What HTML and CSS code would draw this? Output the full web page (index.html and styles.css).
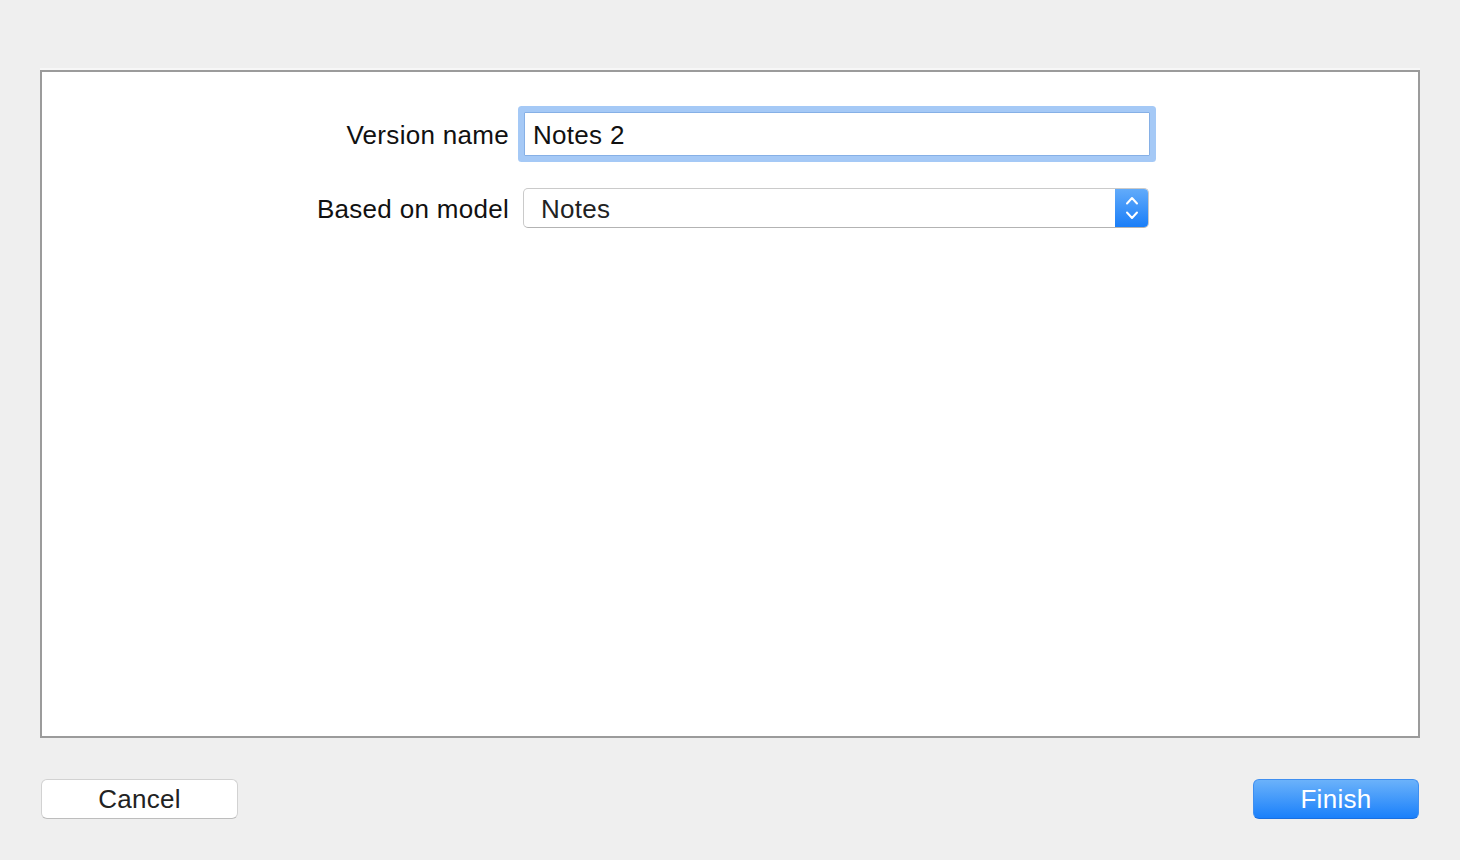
FILE: index.html
```html
<html>
  <head>
    <title>New Version</title>
    <meta name="viewport" content="width=device-width, initial-scale=1">
    <link rel="stylesheet" href="styles.css">
  </head>
  <body>
    <div class="panel">
      <div class="form">
        <label class="label" for="vname">Version name</label>
        <input class="field" id="vname" type="text" value="Notes 2">

        <span class="label">Based on model</span>
        <div class="popup">
          <span class="popup-text">Notes</span>
          <span class="popup-arrows">
            <svg width="16" height="26" viewBox="0 0 16 26">
              <path d="M3 8.5 L8 3 L13 8.5" fill="none" stroke="#fff" stroke-width="2" stroke-linecap="round" stroke-linejoin="round"/>
              <path d="M3 17.5 L8 23 L13 17.5" fill="none" stroke="#fff" stroke-width="2" stroke-linecap="round" stroke-linejoin="round"/>
            </svg>
          </span>
        </div>
      </div>
    </div>

    <div class="footer">
      <button class="button cancel">Cancel</button>
      <button class="button finish">Finish</button>
    </div>
  </body>
</html>
```

FILE: styles.css
```css
body {
  margin: 0;
  background-color: #efefef;
  font-family: "Liberation Sans", Arial, sans-serif;
  font-size: 26px;
  letter-spacing: 0.3px;
  color: #111;
}

/* ----------------------------------- Panel */
.panel {
  margin: 70px 40px 0 40px;
  height: 664px;
  background-color: #fff;
  border: 2px solid #9b9b9b;
  box-shadow: 0 -2px 0 #f7f7f7;
}

.form {
  display: grid;
  grid-template-columns: 467px 640px;
  column-gap: 9px;
  row-gap: 32px;
  align-items: center;
  padding-top: 40px;
}

.label {
  text-align: right;
  white-space: nowrap;
  padding-top: 2px;
}

/* ----------------------------------- Text field */
.field {
  justify-self: start;
  margin-left: 6px;
  width: 626px;
  height: 44px;
  padding: 3px 8px 0 8px;
  box-sizing: border-box;
  font-family: inherit;
  font-size: 26px;
  letter-spacing: 0.3px;
  color: #111;
  background: #fff;
  border: 1px solid #86b0e6;
  border-radius: 1px;
  box-shadow: 0 0 0 6px #a5c9f6;
  outline: none;
}

/* ----------------------------------- Popup button */
.popup {
  justify-self: start;
  margin-left: 5px;
  width: 626px;
  height: 40px;
  box-sizing: border-box;
  display: flex;
  align-items: center;
  background: #fff;
  border: 1px solid #cacaca;
  border-bottom-color: #b3b3b3;
  border-radius: 5px;
  overflow: hidden;
}

.popup-text {
  flex: 1;
  padding: 2px 0 0 17px;
  color: #222;
}

.popup-arrows {
  width: 33px;
  height: 100%;
  display: flex;
  align-items: center;
  justify-content: center;
  background: linear-gradient(#62abfa, #1a7ef8);
}

/* ----------------------------------- Buttons */
.footer {
  display: flex;
  justify-content: space-between;
  padding: 41px 41px 0 41px;
}

.button {
  height: 40px;
  font-family: inherit;
  font-size: 26px;
  letter-spacing: 0.3px;
  border-radius: 6px;
  cursor: pointer;
  padding: 0;
}

.cancel {
  width: 197px;
  color: #222;
  background: #fff;
  border: 1px solid #d2d2d2;
  border-bottom-color: #bdbdbd;
}

.finish {
  width: 166px;
  color: #fff;
  background: linear-gradient(#6bb2fa, #1a80fb);
  border: 1px solid #3f8ff0;
  border-bottom-color: #1a6fe0;
}
```
